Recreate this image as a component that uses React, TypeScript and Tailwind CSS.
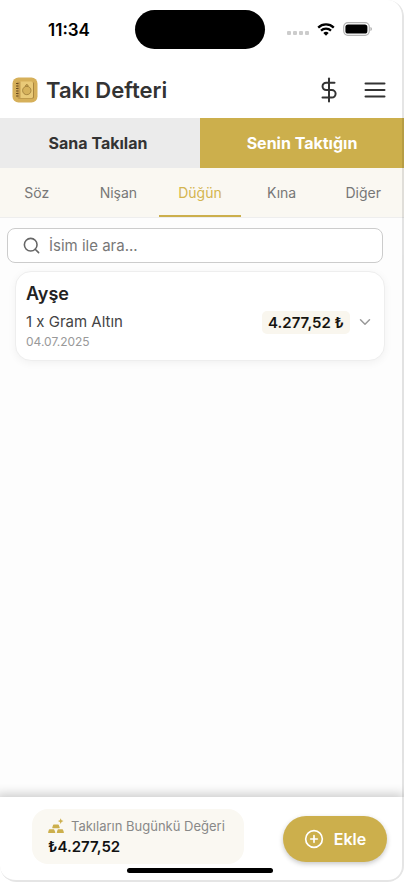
import { ChevronDown, CirclePlus, Search } from "lucide-react";
import { clsx } from "clsx";
import { useState } from "react";

const directions = ["Sana Takılan", "Senin Taktığın"] as const;
const occasions = ["Söz", "Nişan", "Düğün", "Kına", "Diğer"] as const;

type Direction = (typeof directions)[number];
type Occasion = (typeof occasions)[number];

type Gift = {
  name: string;
  item: string;
  date: string;
  value: string;
};

const gifts: readonly Gift[] = [
  { name: "Ayşe", item: "1 x Gram Altın", date: "04.07.2025", value: "4.277,52 ₺" }
];

function WifiIcon() {
  return (
    <svg aria-hidden="true" viewBox="0 0 18 13" className="h-[13px] w-[18px]" fill="none">
      <path d="M1.2 4.6a11.2 11.2 0 0 1 15.6 0" stroke="#000" strokeWidth="2.3" />
      <path d="M4 7.6a7.1 7.1 0 0 1 10 0" stroke="#000" strokeWidth="2.2" />
      <path d="M9 12.8 6.3 10.1a3.9 3.9 0 0 1 5.4 0Z" fill="#000" />
    </svg>
  );
}

function BatteryIcon() {
  return (
    <svg aria-hidden="true" viewBox="0 0 29 14" className="h-[14px] w-[29px]">
      <rect x="0.7" y="0.7" width="25.6" height="12.6" rx="4.2" fill="#fff" stroke="#b3b3b3" strokeWidth="1.2" />
      <rect x="2.4" y="2.4" width="22" height="9.2" rx="2.6" fill="#000" />
      <path d="M27.5 5v4c.8-.3 1.3-1.1 1.3-2s-.5-1.7-1.3-2Z" fill="#a3a3a3" />
    </svg>
  );
}

function LogoIcon() {
  return (
    <svg aria-hidden="true" viewBox="0 0 26 26" className="size-[26px]">
      <rect x="0.5" y="0.5" width="25" height="25" rx="6" fill="#d6b05a" />
      <rect x="5.5" y="5" width="16.5" height="16.5" rx="1.5" fill="#a9853f" />
      <rect x="5" y="4.5" width="16" height="16.5" rx="1.5" fill="#e9ca78" />
      <path d="M6 4.5h2.5V21H6a1 1 0 0 1-1-1V5.500a1 1 0 0 1 1-1Z" fill="#c49c4f" />
      <path d="M4 6.5h2.500M4 9h2.500M4 11.5h2.500M4 14h2.500M4 16.5h2.500M4 19h2.500" stroke="#6b4c20" strokeWidth="1.2" />
      <circle cx="14.8" cy="13.5" r="4.2" fill="#d6b25c" stroke="#9c7b38" strokeWidth="0.8" />
      <path d="m13.300 9 1.500-2 1.500 2Z" fill="#d6b25c" stroke="#9c7b38" strokeWidth="0.7" />
    </svg>
  );
}

function DollarIcon() {
  return (
    <svg aria-hidden="true" viewBox="0 0 16 26" className="h-[26px] w-4" fill="none" stroke="#333" strokeWidth="2" strokeLinecap="round">
      <path d="M8 1.5v23" />
      <path d="M13.5 5.7H5.2a3.6 3.6 0 0 0 0 7.3h5.6a3.8 3.8 0 0 1 0 7.6H1.5" />
    </svg>
  );
}

function MenuIcon() {
  return (
    <svg aria-hidden="true" viewBox="0 0 22 18" className="h-[18px] w-[22px]" stroke="#333" strokeWidth="2" strokeLinecap="round">
      <path d="M1.5 2.5h19M1.5 9h19M1.5 15.5h19" />
    </svg>
  );
}

function GoldIcon() {
  return (
    <svg aria-hidden="true" viewBox="0 0 16 16" className="size-4" fill="#ccaf4c">
      <path d="M1.5 11.3h4.2q.4 0 .6.5l1 2.5q.2.700-.5.700H.6q-.7 0-.5-.7l.8-2.5q.2-.5.6-.5Z" />
      <path d="M10.200 11.3h4.200q.4 0 .6.5l.9 2.500q.2.700-.5.700H9.300q-.7 0-.5-.7l.8-2.500q.2-.5.600-.5Z" />
      <path d="M5.700 6.500h4.500q.4 0 .6.500l.9 2.500q.2.700-.5.700H4.800q-.7 0-.5-.7l.8-2.500q.2-.5.600-.5Z" />
      <path d="m12.700.3.8 2 2 .8-2 .8-.8 2-.8-2-2-.8 2-.8Z" />
    </svg>
  );
}

function StatusBar() {
  return (
    <div className="grid grid-cols-3 items-center pt-[10px] pr-8 pl-8">
      <span className="pl-5 text-[17px] leading-5 font-semibold text-black">11:34</span>
      <span className="h-[39px] w-[130px] justify-self-center rounded-full bg-black" />
      <div className="flex items-center justify-end gap-2 pb-px">
        <span className="flex gap-[2px] pt-2">
          {[0, 1, 2, 3].map((dot) => (
            <span key={dot} className="size-[4px] rounded-[1px] bg-[#cccccc]" />
          ))}
        </span>
        <WifiIcon />
        <BatteryIcon />
      </div>
    </div>
  );
}

function GiftCard({ gift }: { gift: Gift }) {
  return (
    <article className="flex items-center rounded-2xl border border-[#eeeeee] bg-white p-[10px] shadow-[0_2px_8px_rgba(0,0,0,0.05)]">
      <div className="min-w-0 flex-1">
        <h2 className="text-[18px] leading-6 font-semibold text-[#222222]">{gift.name}</h2>
        <p className="pt-1 text-[15px] leading-6 text-[#444444]">{gift.item}</p>
        <time className="block text-[12px] leading-4 text-[#999999]">{gift.date}</time>
      </div>
      <span className="mt-3 rounded-[5px] bg-[#f9f6ee] px-[6px] text-[15px] leading-[23px] font-semibold text-[#16140f]">
        {gift.value}
      </span>
      <button type="button" aria-label="Detayları göster" className="mt-3 ml-[6px] text-[#999999]">
        <ChevronDown size={18} strokeWidth={2} />
      </button>
    </article>
  );
}

export default function App() {
  const [direction, setDirection] = useState<Direction>("Senin Taktığın");
  const [occasion, setOccasion] = useState<Occasion>("Düğün");
  const [query, setQuery] = useState("");

  const visibleGifts = gifts.filter((gift) =>
    gift.name.toLocaleLowerCase("tr").includes(query.toLocaleLowerCase("tr"))
  );

  return (
    <div className="flex min-h-screen flex-col bg-white pr-1 pb-[2px] font-['Inter',sans-serif]">
      <div className="relative flex flex-1 flex-col overflow-hidden rounded-2xl bg-white">
        <div className="-ml-1 flex flex-1 flex-col">
          <StatusBar />

          <header className="flex h-[69px] items-center pt-3 pr-[18px] pl-4">
            <LogoIcon />
            <h1 className="flex-1 pl-2 text-[22px] leading-8 font-semibold text-[#333333]">Takı Defteri</h1>
            <button type="button" aria-label="Döviz kurları">
              <DollarIcon />
            </button>
            <button type="button" aria-label="Menü" className="ml-[27px]">
              <MenuIcon />
            </button>
          </header>

          <div className="grid grid-cols-2">
            {directions.map((option) => (
              <button
                key={option}
                type="button"
                aria-pressed={direction === option}
                onClick={() => setDirection(option)}
                className={clsx(
                  "h-[50px] text-[16px] font-bold",
                  direction === option ? "bg-[#ccaf4c] text-white" : "bg-[#ebebeb] text-[#333333]"
                )}
              >
                {option}
              </button>
            ))}
          </div>

          <nav className="grid grid-cols-5 border-b border-[#eeeeee] bg-[#faf8f2]">
            {occasions.map((option) => (
              <button
                key={option}
                type="button"
                aria-pressed={occasion === option}
                onClick={() => setOccasion(option)}
                className={clsx(
                  "h-[49px] border-b-2 pt-px text-[14px]",
                  occasion === option ? "border-[#ccaf4c] text-[#d4b54f]" : "border-transparent text-[#777777]"
                )}
              >
                {option}
              </button>
            ))}
          </nav>

          <main className="flex-1 bg-[#fdfdfd] pt-[10px] pr-[19px] pl-[11px]">
            <div className="mr-[2px] flex h-[35px] items-center gap-2 rounded-lg border border-[#cccccc] bg-white pl-[14px]">
              <label htmlFor="gift-search" aria-label="İsim ile ara" className="text-[#666666]">
                <Search aria-hidden="true" size={19} strokeWidth={2} />
              </label>
              <input
                id="gift-search"
                value={query}
                onChange={(event) => setQuery(event.target.value)}
                placeholder="İsim ile ara..."
                className="h-8 min-w-0 flex-1 bg-transparent text-[15px] leading-6 text-[#333333] outline-none placeholder:text-[#777777]"
              />
            </div>

            <div className="flex flex-col gap-2 pt-2 pl-2">
              {visibleGifts.map((gift) => (
                <GiftCard key={gift.name} gift={gift} />
              ))}
            </div>
          </main>

          <footer className="bg-white pt-3 pr-[17px] pl-9 shadow-[0_-3px_10px_rgba(0,0,0,0.2)]">
            <div className="flex items-center justify-between">
              <div className="flex h-[55px] w-[212px] flex-col justify-center rounded-2xl bg-[#faf8f2] pl-4">
                <p className="flex items-center gap-[7px] text-[13px] leading-5 whitespace-nowrap text-[#888888]">
                  <GoldIcon />
                  Takıların Bugünkü Değeri
                </p>
                <p className="text-[15px] leading-[22px] font-semibold text-[#111111]">₺4.277,52</p>
              </div>
              <button
                type="button"
                className="mt-1 flex h-[46px] w-[104px] items-center justify-center gap-[10px] rounded-full bg-[#ccaf4c] text-[16px] font-semibold text-white shadow-[0_2px_5px_rgba(0,0,0,0.22)]"
              >
                <CirclePlus aria-hidden="true" size={20} strokeWidth={2} />
                Ekle
              </button>
            </div>
            <div className="flex justify-center pt-1 pr-5 pb-[9px]">
              <span className="h-[5px] w-[146px] rounded-full bg-black" />
            </div>
          </footer>
        </div>
        <div className="pointer-events-none absolute inset-0 rounded-2xl border-r-2 border-b-2 border-black/10" />
      </div>
    </div>
  );
}
